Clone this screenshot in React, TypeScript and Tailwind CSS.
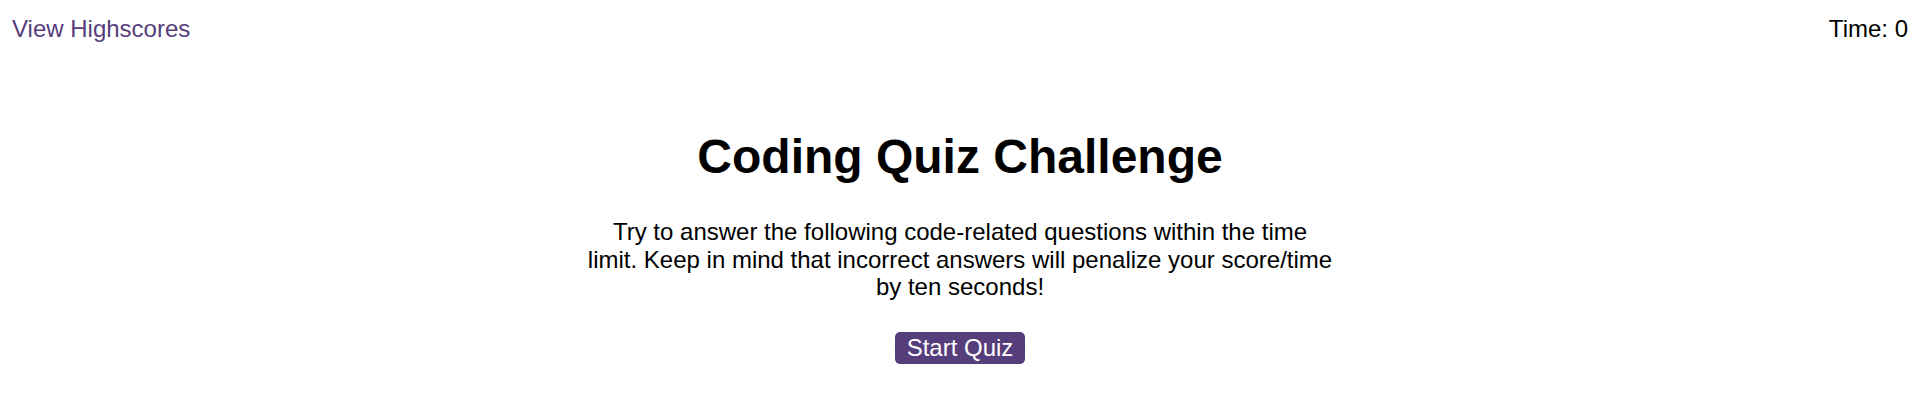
import React from 'react'

export default function App() {
    const time = 0

    return (
        <div className="min-h-[412px] bg-white text-black font-['Liberation_Sans',Arial,sans-serif]">
            <header className="flex justify-between items-start px-3 pt-[11px] text-[24px]">
                <a href="#" className="text-[#563d7c]">View Highscores</a>
                <div>Time: {time}</div>
            </header>

            <main className="flex flex-col items-center text-center">
                <h1 className="mt-[82px] text-[48px] font-bold leading-[1.15]">Coding Quiz Challenge</h1>
                <p className="mt-[34px] w-[746px] text-[24px] leading-[27.6px]">
                    Try to answer the following code-related questions within the time limit. Keep in mind that incorrect answers will penalize your score/time by ten seconds!
                </p>
                <button className="mt-[31px] px-[12px] py-[2px] rounded-[5px] bg-[#563d7c] text-white text-[24px] leading-[27.6px]">
                    Start Quiz
                </button>
            </main>
        </div>
    )
}
